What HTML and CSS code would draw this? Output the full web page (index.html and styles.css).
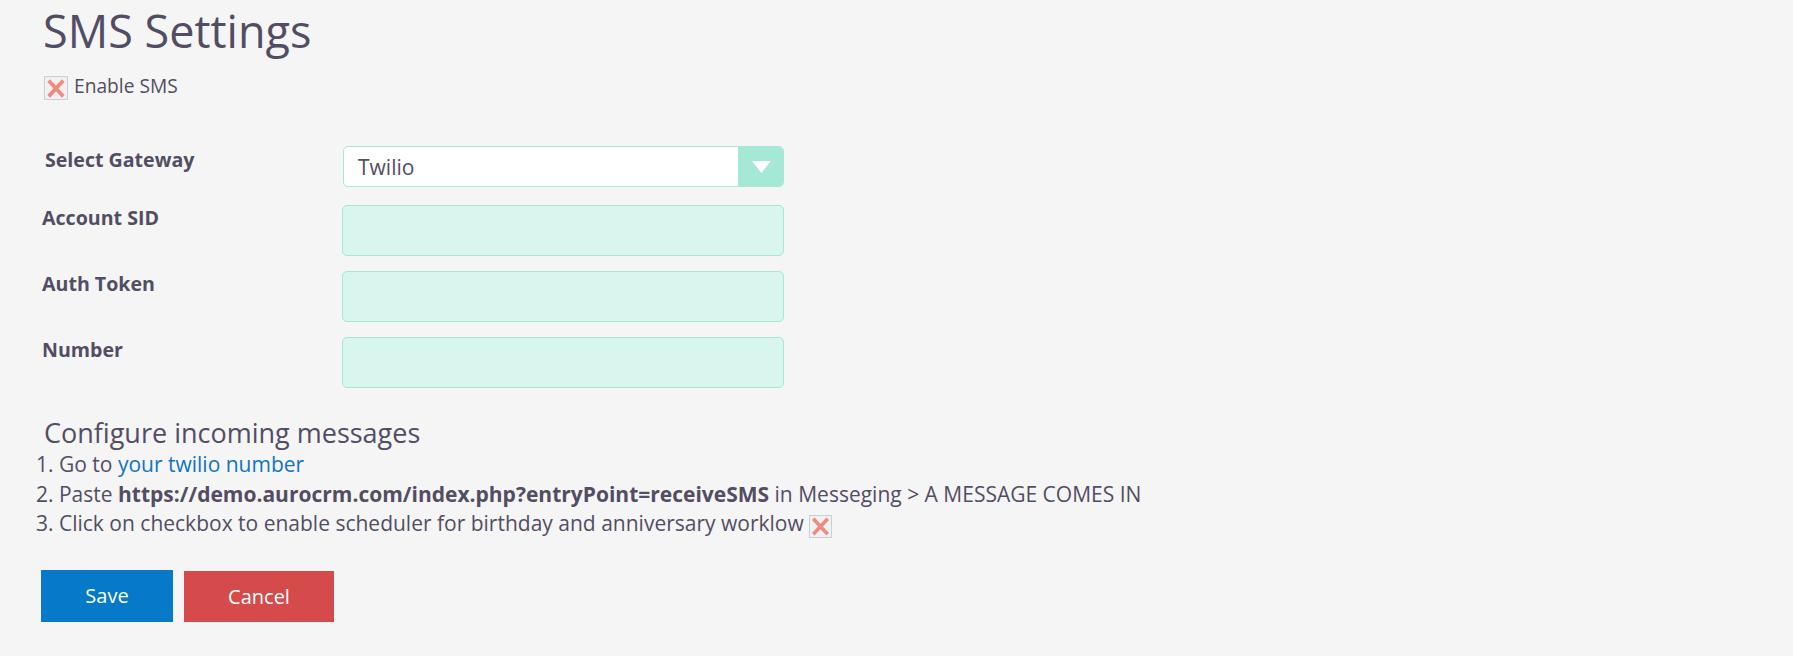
FILE: index.html
```html
<!DOCTYPE html>
<html lang="en">
<head>
    <meta charset="UTF-8">
    <meta name="viewport" content="width=device-width, initial-scale=1.0">
    <title>SMS Settings</title>
    <link rel="stylesheet" href="styles.css">
</head>
<body>
    <div class="page">
        <h1 class="title">SMS Settings</h1>

        <label class="enable">
            <svg class="xbox" width="24" height="24" viewBox="0 0 24 24">
                <rect x="0.5" y="0.5" width="23" height="23" fill="#f1f1f1" stroke="#c9cfd7"/>
                <path d="M6 6 L18 19 M18 6 L6 19" stroke="#f08a80" stroke-width="3.8" stroke-linecap="square"/>
            </svg>
            <span>Enable SMS</span>
        </label>

        <div class="form">
            <div class="row row-select">
                <label class="first">Select Gateway</label>
                <div class="select">
                    <span class="select-value">Twilio</span>
                    <span class="select-btn">
                        <svg width="19" height="12" viewBox="0 0 19 12"><path d="M0 0 H19 L9.5 12 Z" fill="#fff"/></svg>
                    </span>
                </div>
            </div>
            <div class="row">
                <label>Account SID</label>
                <input class="field" type="text">
            </div>
            <div class="row">
                <label>Auth Token</label>
                <input class="field" type="text">
            </div>
            <div class="row">
                <label>Number</label>
                <input class="field" type="text">
            </div>
        </div>

        <h3 class="sub">Configure incoming messages</h3>
        <ol class="steps">
            <li>Go to <a href="#">your twilio number</a></li>
            <li>Paste <strong>https://demo.aurocrm.com/index.php?entryPoint=receiveSMS</strong> in Messeging &gt; A MESSAGE COMES IN</li>
            <li>Click on checkbox to enable scheduler for birthday and anniversary worklow
                <svg class="xbox inline" width="23" height="23" viewBox="0 0 23 23">
                    <rect x="0.5" y="0.5" width="22" height="22" fill="#f1f1f1" stroke="#c9cfd7"/>
                    <path d="M5.5 5 L17.5 18 M17.5 5 L5.5 18" stroke="#f08a80" stroke-width="3.6" stroke-linecap="square"/>
                </svg>
            </li>
        </ol>

        <div class="actions">
            <button class="btn btn-save">Save</button>
            <button class="btn btn-cancel">Cancel</button>
        </div>
    </div>
</body>
</html>
```

FILE: styles.css
```css
body {
    margin: 0;
    background-color: #f5f5f5;
    font-family: 'Open Sans', 'Liberation Sans', sans-serif;
    color: #534d64;
}
.page {
    padding: 4px 0 0 42px;
}
.title {
    margin: 0 0 0 1px;
    font-size: 45px;
    font-weight: 400;
    line-height: 53px;
}
.enable {
    display: flex;
    align-items: flex-start;
    margin-top: 19px;
    margin-left: 2px;
    font-size: 19.2px;
    line-height: 19px;
}
.enable span {
    margin-left: 6px;
}
.xbox {
    display: block;
    flex-shrink: 0;
}
.form {
    margin-top: 46px;
    width: 742px;
}
.row {
    display: grid;
    grid-template-columns: 300px 442px;
    margin-top: 16px;
}
.row label {
    font-size: 19.6px;
    font-weight: 700;
    line-height: 24px;
    padding-top: 1px;
}
.row label.first {
    padding-left: 3px;
    padding-top: 2px;
}
.row-select {
    margin-top: 0;
    margin-bottom: 18px;
}
.select {
    display: flex;
    height: 41px;
    margin-left: 1px;
    background-color: #fff;
    border: 1px solid #a5e8d6;
    border-radius: 5px;
    box-sizing: border-box;
    overflow: hidden;
}
.select-value {
    flex: 1;
    padding-left: 14px;
    font-size: 21px;
    line-height: 40px;
}
.select-btn {
    width: 45px;
    background-color: #a5e8d6;
    display: flex;
    align-items: center;
    justify-content: center;
    padding-left: 2px;
    box-sizing: border-box;
}
.field {
    height: 51px;
    box-sizing: border-box;
    background-color: #d8f5ee;
    border: 1px solid #a5e8d6;
    border-radius: 5px;
    margin: 0;
}
.row + .row + .row {
    margin-top: 15px;
}
.sub {
    margin: 30px 0 0 2px;
    font-size: 27px;
    font-weight: 400;
    line-height: 30px;
}
.steps {
    margin: 2px 0 0 -6px;
    padding: 0;
    list-style: decimal inside;
    font-size: 21px;
    line-height: 29.5px;
}
.steps a {
    color: #1373c2;
    text-decoration: none;
}
.xbox.inline {
    display: inline-block;
    vertical-align: -7px;
}
.actions {
    display: flex;
    align-items: flex-end;
    gap: 11px;
    margin-top: 31px;
    margin-left: -1px;
}
.btn {
    border: none;
    color: #fff;
    font-family: inherit;
    font-size: 20px;
    cursor: pointer;
    padding: 0;
}
.btn-save {
    width: 132px;
    height: 52px;
    background-color: #0679c8;
}
.btn-cancel {
    width: 150px;
    height: 51px;
    background-color: #d54b4b;
}
```
